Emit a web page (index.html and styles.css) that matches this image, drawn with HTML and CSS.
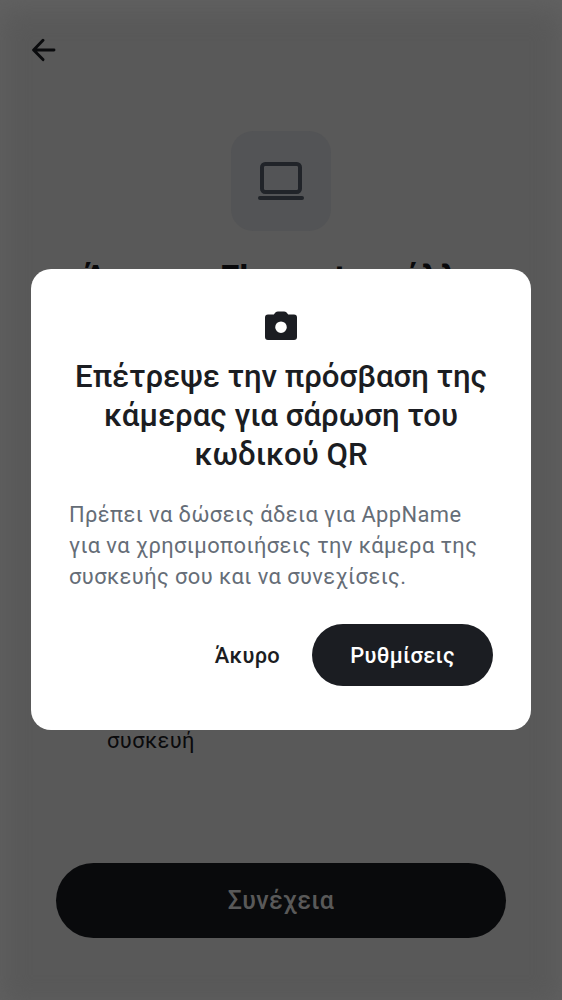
FILE: index.html
```html
<!DOCTYPE html>
<html lang="el">
<head>
<meta charset="utf-8">
<title>QR</title>
<link rel="stylesheet" href="styles.css">
</head>
<body>
<main class="screen">
  <header class="topbar">
    <svg class="back" viewBox="0 0 24 24"><path d="M22 12H2M11 2.2 1.6 12 11 21.6"/></svg>
  </header>
  <div class="tile">
    <svg class="laptop" viewBox="0 0 46 38"><rect x="4" y="2" width="38" height="28" rx="3.2"/><path d="M2 36H44"/></svg>
  </div>
  <h1 class="heading">Άνοιγμα Element σε άλλη</h1>
  <p class="step">συσκευή</p>
  <button class="continue">Συνέχεια</button>
</main>
<div class="overlay">
  <section class="dialog">
    <svg class="camera" viewBox="0 0 32 29"><path fill-rule="evenodd" d="M3 3.5H8.8L10.4 1.6Q11.5.4 13 .4H19Q20.5.4 21.6 1.6L23.2 3.5H29Q32 3.5 32 6.5V26Q32 29 29 29H3Q0 29 0 26V6.5Q0 3.5 3 3.5ZM16 10.4A5.8 5.8 0 1 0 16 22A5.8 5.8 0 1 0 16 10.4Z"/></svg>
    <h2 class="title">Επέτρεψε την πρόσβαση της κάμερας για σάρωση του κωδικού QR</h2>
    <p class="message">Πρέπει να δώσεις άδεια για AppName για να χρησιμοποιήσεις την κάμερα της συσκευής σου και να συνεχίσεις.</p>
    <div class="actions">
      <button class="cancel">Άκυρο</button>
      <button class="settings">Ρυθμίσεις</button>
    </div>
  </section>
</div>
</body>
</html>
```
FILE: styles.css
```css
* { box-sizing: border-box; margin: 0; }
body { font-family: Roboto, "Noto Sans", sans-serif; background: #595959; }
button { font: inherit; border: 0; padding: 0; }
.screen {
  height: 1000px;
  display: flex;
  flex-direction: column;
  align-items: center;
  background: #595959;
  box-shadow: inset 0 8px 28px #626262;
}
.topbar { width: 100%; height: 131px; padding: 38px 32px; }
.back { display: block; width: 24px; height: 24px; fill: none; stroke: #0a0b0d; stroke-width: 2.9; stroke-linecap: round; stroke-linejoin: round; }
.tile {
  width: 100px;
  height: 100px;
  border-radius: 22px;
  background: #535456;
  padding: 31px 27px;
}
.laptop { display: block; width: 46px; height: 38px; fill: none; stroke: #212429; stroke-width: 4; stroke-linecap: round; }
.heading { margin-top: 27px; font-size: 34.3px; line-height: 40px; font-weight: 700; color: #09090b; white-space: nowrap; }
.step { align-self: flex-start; margin: 427px 0 0 107px; font-size: 21.9px; line-height: 31.2px; letter-spacing: .39px; color: #0a0a0c; }
.continue {
  width: 450px;
  height: 75px;
  margin-top: 106.3px;
  padding-top: 1px;
  border-radius: 38px;
  background: #090a0c;
  color: #595959;
  font-size: 25px;
  font-weight: 500;
  letter-spacing: .4px;
}
.overlay { position: absolute; inset: 0; padding-bottom: 1px; display: flex; align-items: center; justify-content: center; }
.dialog {
  width: 500px;
  height: 461px;
  padding: 42px 38px 44px;
  display: flex;
  flex-direction: column;
  border-radius: 20px;
  background: #fff;
}
.camera { width: 32px; height: 29px; align-self: center; fill: #1b1d22; }
.title { margin-top: 17px; text-align: center; font-size: 31.2px; line-height: 39px; font-weight: 500; color: #1b1d22; }
.message { margin-top: 25px; font-size: 21.9px; line-height: 31.2px; letter-spacing: .41px; color: #656d77; }
.actions { display: flex; justify-content: flex-end; gap: 32px; margin-top: auto; }
.cancel, .settings { height: 62px; font-size: 21.9px; font-weight: 500; letter-spacing: .28px; background: none; color: #1b1d22; }
.settings { width: 181px; border-radius: 31px; background: #1b1d22; color: #fff; }
```
